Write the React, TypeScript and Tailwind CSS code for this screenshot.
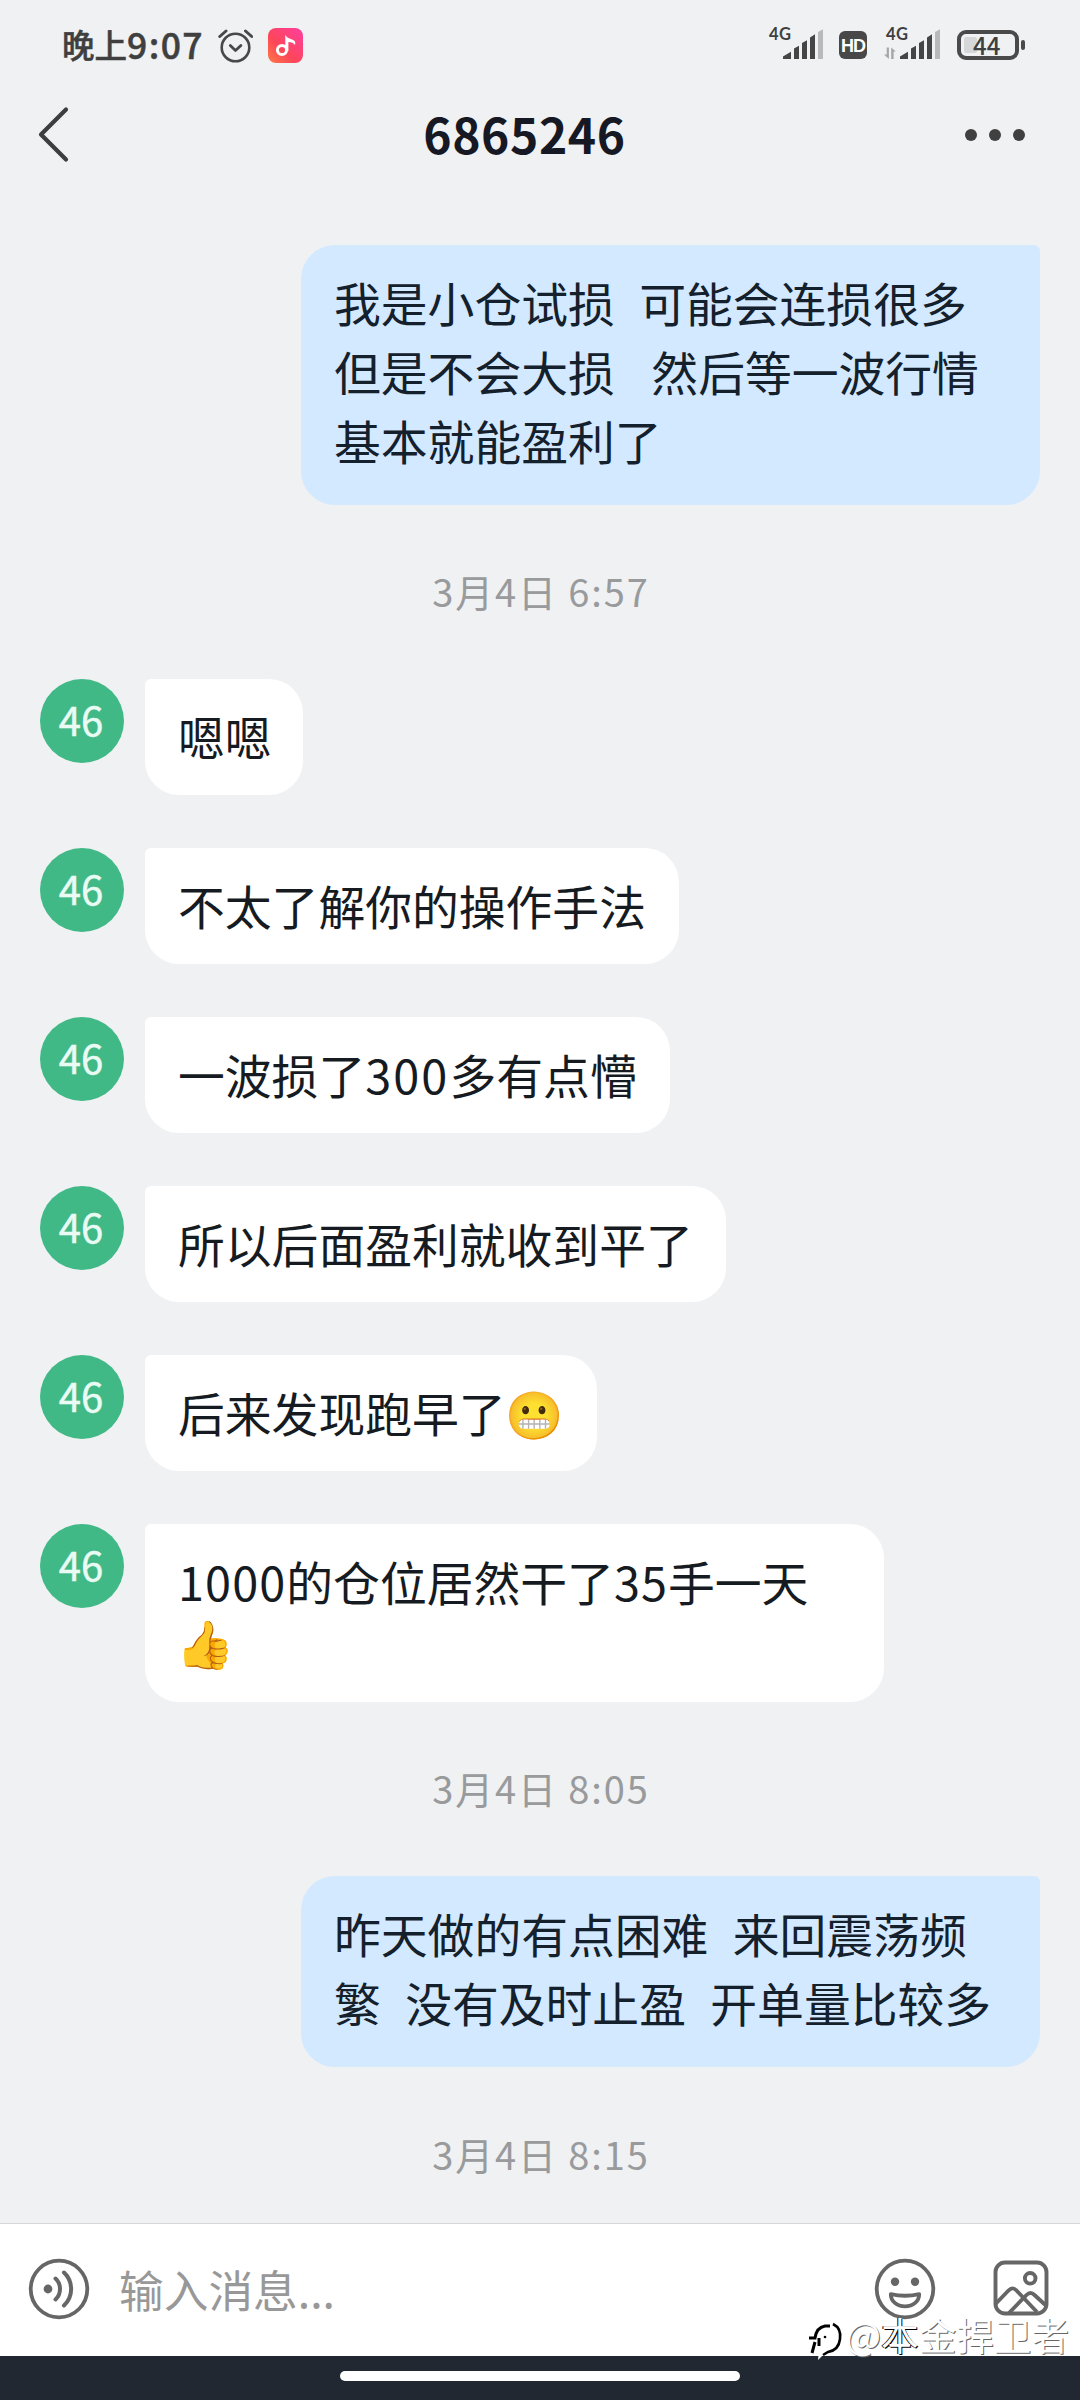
import type { ReactNode } from 'react';

const Num = ({ children }: { children: ReactNode }) => (
  <span className="tracking-[2.1px]">{children}</span>
);

const NarrowNum = ({ children }: { children: ReactNode }) => (
  <span className="tracking-[1.1px]">{children}</span>
);

function Signal({ data }: { data?: boolean }) {
  return (
    <svg className="h-8 w-[57px]" viewBox="0 0 57 32" fill="#454545">
      {data && <path d="M2.7 19.5h2.2V31L0 26.6h2.7zM7.2 31V19.5l4.6 4H9.6V31z" fill="#a6a6a6" />}
      <path d="M16 31v-2.6l8-4.6V31z" />
      <path d="M27 31V20.5l5-2.8V31z" />
      <path d="M35 31V15l5-2.8V31z" />
      <path d="M43 31V9.5l5-3.3V31z" />
      <path d="M51 31V4l5-2.7V31z" fill="#b9b9ba" />
    </svg>
  );
}

function Cellular({ data }: { data?: boolean }) {
  return (
    <div className="relative h-8 w-[57px]">
      <span className="absolute top-0 left-[2px] font-['Lato'] text-[16.5px] leading-[13px] font-bold tracking-[0.5px]">
        4G
      </span>
      <Signal data={data} />
    </div>
  );
}

function StatusBar() {
  return (
    <div className="flex h-[90px] shrink-0 items-start justify-between pr-[55px] pl-[62px] pt-7 text-[#3f3f3f]">
      <div className="flex h-[34px] items-center">
        <div className="-mt-[2px] flex items-center font-medium [-webkit-text-stroke:0.5px]">
          <span className="text-[32.5px] leading-[34px]">晚上</span>
          <span className="w-[76px] text-[35.5px] leading-[34px] tracking-[1.4px]">9:07</span>
        </div>
        <svg className="ml-[15px] h-[35px] w-[35px]" viewBox="0 0 35 35" fill="none" stroke="#484848" strokeLinecap="round">
          <circle cx="17.5" cy="19.5" r="13.8" strokeWidth="2.6" />
          <path d="M12.3 17.5l5.2 5 5.4-5" strokeWidth="2.8" strokeLinejoin="round" />
          <path d="M1.8 8.5L8 3M27.5 3l6.2 5.5" strokeWidth="3" />
        </svg>
        <svg className="ml-[15px] h-[35px] w-[35px]" viewBox="0 0 35 35">
          <defs>
            <linearGradient id="music" x1="0" y1="1" x2="1" y2="0">
              <stop offset="0" stopColor="#ff7a45" />
              <stop offset="0.4" stopColor="#fd4659" />
              <stop offset="1" stopColor="#ff3fa0" />
            </linearGradient>
          </defs>
          <rect width="35" height="35" rx="8" fill="url(#music)" />
          <circle cx="14" cy="22" r="4.6" fill="none" stroke="#fff" strokeWidth="3" />
          <path d="M17.3 6.5c1.5 3.6 4.6 4 8 5.4 2 1 2.4 2.8 1.7 5.2-1.3-2-3.6-2.8-6.6-3V23h-3.1z" fill="#fff" />
        </svg>
      </div>
      <div className="flex h-8 items-start">
        <Cellular />
        <span className="mt-[3px] ml-[15px] flex h-7 w-7 items-center justify-center rounded-[6px] bg-[#484848] pt-px font-['Liberation_Sans'] text-[18px] leading-none font-bold tracking-[-1px] text-white">
          HD
        </span>
        <div className="ml-[17px]">
          <Cellular data />
        </div>
        <div className="mt-[2px] ml-[16px] flex items-center gap-[2px]">
          <div className="flex h-[30px] w-[62px] items-center rounded-[9px] border-4 border-[#4a4a4a] pl-[3px]">
            <span className="h-4 w-[13px] rounded-[2px] bg-[#d6d7d8]" />
            <span className="-mt-px -ml-[4px] text-[24px] leading-none font-medium">44</span>
          </div>
          <span className="h-[10px] w-[4px] rounded-[2px] bg-[#4a4a4a]" />
        </div>
      </div>
    </div>
  );
}

function Header() {
  return (
    <header className="grid h-[155px] shrink-0 grid-cols-[1fr_300px_1fr] items-start pr-[55px] pl-[36px]">
      <svg className="mt-[14px] h-[60px] w-9" viewBox="0 0 36 60" fill="none" stroke="#3d3d3d" strokeWidth="4.2" strokeLinecap="round" strokeLinejoin="round">
        <path d="M30 5.5L5 30.5L30 55.5" />
      </svg>
      <h1 className="mt-[8px] -ml-[12px] text-center text-[48px] leading-[70px] font-bold tracking-[0.6px] text-[#161823]">
        6865246
      </h1>
      <div className="mt-[39px] flex justify-end gap-[11.5px]">
        <span className="size-[12.4px] rounded-full bg-[#404040]" />
        <span className="size-[12.4px] rounded-full bg-[#404040]" />
        <span className="size-[12.4px] rounded-full bg-[#404040]" />
      </div>
    </header>
  );
}

function Outgoing({ children }: { children: ReactNode }) {
  return (
    <div className="ml-[301px] w-[739px] rounded-[34px] rounded-tr-[6px] bg-[#d2e9ff] px-[33px] pt-[22px] pb-[31px] text-[46.8px] leading-[69px] whitespace-pre text-[#14202c] [word-spacing:1.7px]">
      {children}
    </div>
  );
}

function Incoming({ children }: { children: ReactNode }) {
  return (
    <div className="flex items-start pl-10">
      <div className="flex size-[84px] shrink-0 items-center justify-center rounded-full bg-[#40b987] pr-[2px] pb-[5px] text-[40px] leading-none text-[#e9fbf3] [-webkit-text-stroke:0.5px]">
        46
      </div>
      <div className="ml-[21px] max-w-[739px] rounded-[34px] rounded-tl-[6px] bg-white px-[33px] pt-[26px] pb-[28px] text-[46.8px] leading-[62px] whitespace-nowrap text-[#161b22]">
        {children}
      </div>
    </div>
  );
}

function Stamp({ children }: { children: ReactNode }) {
  return (
    <div className="pl-[2px] text-center text-[38px] leading-[56px] tracking-[1.9px] text-[#999a9c]">
      {children}
    </div>
  );
}

function InputBar() {
  return (
    <div className="flex h-[133px] shrink-0 items-start border-t border-[#d6d7d8] bg-white pr-[31px] pl-7">
      <svg className="mt-[34px] size-[62px]" viewBox="-31 -31 62 62" fill="none" stroke="#666" strokeLinecap="round">
        <circle r="28.3" strokeWidth="3.8" />
        <circle cx="-11" cy="0" r="4.4" fill="#666" stroke="none" />
        <path d="M-3.5-10.5C2.5-5 2.5 5-3.5 10.5M5-16.5C14.5-7.5 14.5 7.5 5 16.5" strokeWidth="4" />
      </svg>
      <div className="mt-[32px] ml-[29px] grow text-[44.7px] leading-[66px] text-[#989898]">输入消息...</div>
      <svg className="mt-[34px] size-[62px]" viewBox="-31 -31 62 62" fill="none" stroke="#666">
        <circle r="28.3" strokeWidth="3.8" />
        <circle cx="-10" cy="-7.3" r="4.2" fill="#666" stroke="none" />
        <circle cx="10" cy="-7.3" r="4.2" fill="#666" stroke="none" />
        <path d="M-14.2 5.2c0 7 6 12.2 14.2 12.2s14.2-5.2 14.2-12.2C5 7.2-5 7.2-14.2 5.2z" strokeWidth="3.8" strokeLinejoin="round" />
      </svg>
      <svg className="mt-[36px] ml-[57px] size-[56px]" viewBox="0 0 56 56" fill="none" stroke="#666" strokeWidth="3.9" strokeLinejoin="round">
        <rect x="2.5" y="2.5" width="51" height="51" rx="9.5" />
        <circle cx="37.2" cy="18.3" r="5.3" />
        <path d="M2.5 44L15.5 30.5q4-4.2 8 0L44 52" />
        <path d="M16 53L33.5 35q4-4 8 0L53.5 46" />
      </svg>
    </div>
  );
}

function Watermark() {
  return (
    <div className="absolute right-[11px] bottom-[38px] flex items-center">
      <svg className="mt-[14px] mr-0 h-[42px] w-[38px]" viewBox="0 0 38 42" fill="none">
        <path d="M15 4C25-1 33 6 32 18c-1 9-7 12-13 13l-9 9 1-10C11 23 12 13 15 4z" fill="#fff" />
        <path d="M25 4c6 3 8 8 7 15-1 9-6 12-12 13l-5 3" stroke="#000" strokeWidth="2.6" />
        <path d="M1 18h6c1-7 4-11 10-12h5M7 22L4 33M11 18v8" stroke="#000" strokeWidth="3" />
        <circle cx="17" cy="17" r="1.3" fill="#000" />
      </svg>
      <span className="text-[37.6px] leading-[50px] text-white [text-shadow:1px_1px_0_#666]">
        @<span className="[text-shadow:1px_1px_0_#000,-1px_0_0_#000]">本</span>金捍卫者
      </span>
    </div>
  );
}

export default function App() {
  return (
    <div
      lang="zh-CN"
      className="relative flex h-[2400px] w-[1080px] flex-col overflow-hidden bg-[#eff1f3] font-['Noto_Sans_CJK_SC','Noto_Color_Emoji',sans-serif]"
    >
      <StatusBar />
      <Header />
      <main className="flex grow flex-col">
        <Outgoing>{'我是小仓试损  可能会连损很多\n但是不会大损   然后等一波行情\n基本就能盈利了'}</Outgoing>
        <div className="pt-[58px] pb-[60px]">
          <Stamp>3月4日 6:57</Stamp>
        </div>
        <div className="flex flex-col gap-[53px]">
          <Incoming>
            <span className="-mr-[2px]">嗯嗯</span>
          </Incoming>
          <Incoming>不太了解你的操作手法</Incoming>
          <Incoming>
            一波损了<Num>300</Num>多有点懵
          </Incoming>
          <Incoming>所以后面盈利就收到平了</Incoming>
          <Incoming>后来发现跑早了😬</Incoming>
          <Incoming>
            <span className="block w-[673px]">
              <NarrowNum>1000</NarrowNum>的仓位居然干了<NarrowNum>35</NarrowNum>手一天
            </span>
            <span className="-mt-[2px] mb-[2px] -ml-[2px] block">👍</span>
          </Incoming>
        </div>
        <div className="pt-[58px] pb-[60px]">
          <Stamp>3月4日 8:05</Stamp>
        </div>
        <Outgoing>{'昨天做的有点困难  来回震荡频\n繁  没有及时止盈  开单量比较多'}</Outgoing>
        <div className="pt-[59px]">
          <Stamp>3月4日 8:15</Stamp>
        </div>
      </main>
      <InputBar />
      <div className="flex h-11 shrink-0 justify-center bg-[#222831] pt-[15px]">
        <span className="h-[10px] w-[400px] rounded-full bg-white" />
      </div>
      <Watermark />
    </div>
  );
}
